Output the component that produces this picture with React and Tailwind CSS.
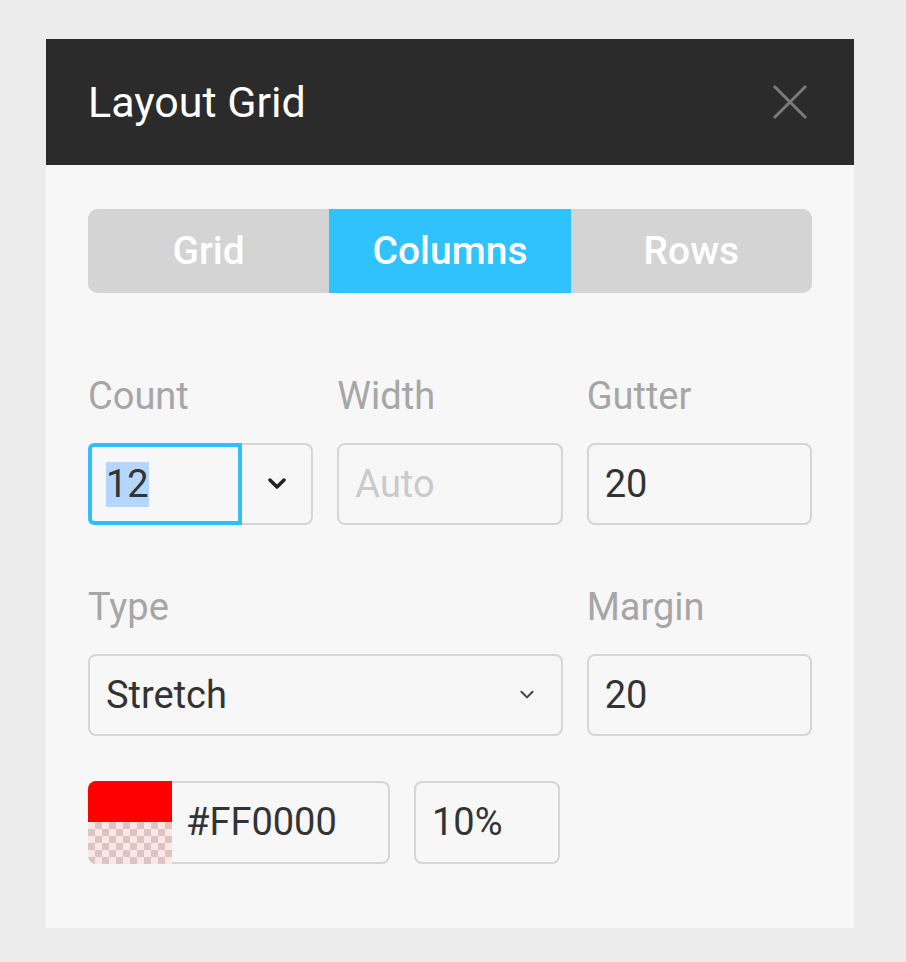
import { useState } from "react";

const font = { fontFamily: "Roboto, 'Noto Sans', sans-serif" };

function Chevron({ className }) {
  return (
    <svg viewBox="0 0 20 12" className={className} fill="none" stroke="currentColor" strokeLinecap="round" strokeLinejoin="round">
      <path d="M3 2 L10 9 L17 2" />
    </svg>
  );
}

function Label({ children }) {
  return <div className="text-[38px] leading-[38px] text-[#a6a6a6] mb-[28px]">{children}</div>;
}

function Box({ children, className = "" }) {
  return (
    <div className={`h-[82px] border-2 border-[#d6d6d6] rounded-[8px] flex items-center px-[16px] text-[38px] text-[#333] ${className}`}>
      {children}
    </div>
  );
}

export default function App() {
  const [tab, setTab] = useState("Columns");
  const tabs = ["Grid", "Columns", "Rows"];

  return (
    <div className="min-h-screen bg-[#ececec] pt-[39px] pl-[46px]" style={font}>
      <div className="w-[808px] bg-[#f7f7f7] pb-[64px]">
        <div className="h-[126px] bg-[#2b2b2b] flex items-center justify-between pl-[42px] pr-[46px]">
          <div className="text-[43px] text-white leading-none">Layout Grid</div>
          <svg viewBox="0 0 36 36" className="w-[36px] h-[36px] text-[#7a7a7a]" fill="none" stroke="currentColor" strokeWidth="3">
            <path d="M2 2 L34 34 M34 2 L2 34" />
          </svg>
        </div>

        <div className="px-[42px] pt-[44px]">
          <div className="grid grid-cols-3 h-[84px] rounded-[10px] overflow-hidden bg-[#d4d4d4]">
            {tabs.map((t) => (
              <button
                key={t}
                onClick={() => setTab(t)}
                className={`flex items-center justify-center text-[39px] font-medium text-white ${
                  tab === t ? "bg-[#2fc2fc]" : "bg-[#d4d4d4]"
                }`}
              >
                {t}
              </button>
            ))}
          </div>

          <div className="grid grid-cols-3 gap-x-[24px] mt-[84px]">
            <div>
              <Label>Count</Label>
              <div className="flex h-[82px]">
                <div className="w-[154px] border-[4px] border-[#2fc0fb] rounded-l-[6px] flex items-center pl-[14px]">
                  <span className="text-[38px] leading-[45px] text-[#333] bg-[#b5d6fe]">12</span>
                </div>
                <div className="flex-1 border-2 border-l-0 border-[#d6d6d6] rounded-r-[8px] flex items-center justify-center">
                  <Chevron className="w-[20px] h-[12px] text-[#222] [stroke-width:3.5]" />
                </div>
              </div>
            </div>
            <div>
              <Label>Width</Label>
              <Box>
                <span className="text-[#cacaca]">Auto</span>
              </Box>
            </div>
            <div>
              <Label>Gutter</Label>
              <Box>20</Box>
            </div>

            <div className="col-span-2 mt-[63px]">
              <Label>Type</Label>
              <Box className="justify-between pr-[26px]">
                <span>Stretch</span>
                <Chevron className="w-[16px] h-[10px] text-[#444] [stroke-width:2.5]" />
              </Box>
            </div>
            <div className="mt-[63px]">
              <Label>Margin</Label>
              <Box>20</Box>
            </div>
          </div>

          <div className="flex gap-[24px] mt-[45px]">
            <div className="flex h-[83px] w-[302px]">
              <div className="w-[84px] rounded-l-[8px] overflow-hidden flex flex-col">
                <div className="h-[41px] bg-[#ff0000]" />
                <div className="flex-1 bg-[image:repeating-conic-gradient(#dcc4c4_0%_25%,#fce6e6_0%_50%)] bg-[length:14px_14px]" />
              </div>
              <div className="flex-1 border-2 border-l-0 border-[#d6d6d6] rounded-r-[8px] flex items-center pl-[14px] text-[38px] text-[#333]">
                #FF0000
              </div>
            </div>
            <Box className="w-[146px] h-[83px]">10%</Box>
          </div>
        </div>
      </div>
    </div>
  );
}
